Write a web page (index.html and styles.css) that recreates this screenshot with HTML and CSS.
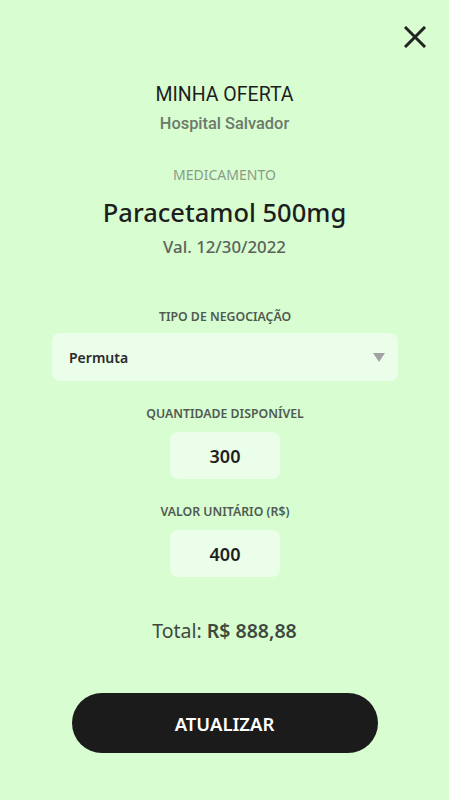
FILE: index.html
```html
<!DOCTYPE html>
<html lang="pt-BR">
<head>
  <meta charset="UTF-8" />
  <meta name="viewport" content="width=device-width, initial-scale=1.0" />
  <title>Minha Oferta</title>
  <link rel="stylesheet" href="styles.css">
</head>
<body>
  <div class="screen">
    <div class="topbar">
      <button class="close-btn" aria-label="Fechar">
        <svg width="22" height="22" viewBox="0 0 22 22">
          <path d="M2 2 L20 20 M20 2 L2 20" stroke="#222" stroke-width="3" stroke-linecap="square" fill="none" />
        </svg>
      </button>
    </div>

    <div class="header">
      <h1 class="title">MINHA OFERTA</h1>
      <div class="subtitle">Hospital Salvador</div>
    </div>

    <div class="med">
      <div class="med-label">MEDICAMENTO</div>
      <div class="med-name">Paracetamol 500mg</div>
      <div class="med-val">Val. 12/30/2022</div>
    </div>

    <div class="form">
      <div class="field field-select">
        <label class="field-label">TIPO DE NEGOCIAÇÃO</label>
        <div class="select">
          <span>Permuta</span>
          <span class="caret"></span>
        </div>
      </div>

      <div class="field">
        <label class="field-label">QUANTIDADE DISPONÍVEL</label>
        <div class="small-input">300</div>
      </div>

      <div class="field">
        <label class="field-label">VALOR UNITÁRIO (R$)</label>
        <div class="small-input">400</div>
      </div>
    </div>

    <div class="total">Total: <strong>R$ 888,88</strong></div>

    <button class="submit">ATUALIZAR</button>
  </div>
</body>
</html>
```

FILE: styles.css
```css
body {
  margin: 0;
  background: #d7fdd1;
  font-family: "Noto Sans", sans-serif;
  color: #222;
}
.screen {
  height: 800px;
  display: flex;
  flex-direction: column;
  align-items: center;
}
.topbar {
  align-self: stretch;
  display: flex;
  justify-content: flex-end;
  padding: 26px 23px 0 0;
}
.close-btn {
  background: none;
  border: none;
  padding: 0;
  width: 22px;
  height: 22px;
  cursor: pointer;
}
.header {
  text-align: center;
  margin-top: 34px;
}
.title {
  margin: 0;
  font-family: Roboto, sans-serif;
  font-weight: 400;
  font-size: 19.5px;
  line-height: 26px;
  color: #1e1e1e;
}
.subtitle {
  font-family: Roboto, sans-serif;
  font-weight: 500;
  font-size: 16.4px;
  line-height: 20px;
  margin-top: 6px;
  color: #6c7a6a;
}
.med {
  text-align: center;
  margin-top: 31px;
}
.med-label {
  font-size: 14px;
  line-height: 20px;
  color: #8b9b88;
}
.med-name {
  font-size: 25.5px;
  line-height: 32px;
  font-weight: 500;
  margin-top: 11px;
  color: #1e1e1e;
}
.med-val {
  font-size: 16.8px;
  line-height: 22px;
  font-weight: 500;
  margin-top: 8px;
  color: #5a635a;
}
.form {
  margin-top: 50px;
  display: flex;
  flex-direction: column;
  align-items: center;
  gap: 24px;
  align-self: stretch;
  padding: 0 51px 0 52px;
}
.field {
  display: flex;
  flex-direction: column;
  align-items: center;
  gap: 10px;
  align-self: stretch;
}
.field-select {
  gap: 8px;
}
.field-label {
  font-size: 12.3px;
  line-height: 17px;
  font-weight: 600;
  color: #515a51;
}
.select {
  align-self: stretch;
  height: 48px;
  border-radius: 8px;
  background: #ebfeea;
  display: flex;
  align-items: center;
  justify-content: space-between;
  padding: 0 13px 0 17px;
  font-size: 14px;
  font-weight: 600;
  color: #2a2a2a;
}
.caret {
  width: 0;
  height: 0;
  border-left: 6px solid transparent;
  border-right: 6px solid transparent;
  border-top: 9px solid #a3a3a3;
}
.small-input {
  width: 110px;
  height: 47px;
  border-radius: 8px;
  background: #ebfeea;
  display: flex;
  align-items: center;
  justify-content: center;
  font-size: 18px;
  font-weight: 600;
  color: #1e1e1e;
}
.total {
  margin-top: 40px;
  font-size: 19.5px;
  color: #3f4a3e;
}
.total strong {
  font-weight: 600;
}
.submit {
  margin-top: 49px;
  width: 306px;
  height: 60px;
  border: none;
  border-radius: 30px;
  background: #1b1b1b;
  color: #fff;
  font-family: "Noto Sans", sans-serif;
  font-size: 18.5px;
  font-weight: 600;
  cursor: pointer;
}
```
